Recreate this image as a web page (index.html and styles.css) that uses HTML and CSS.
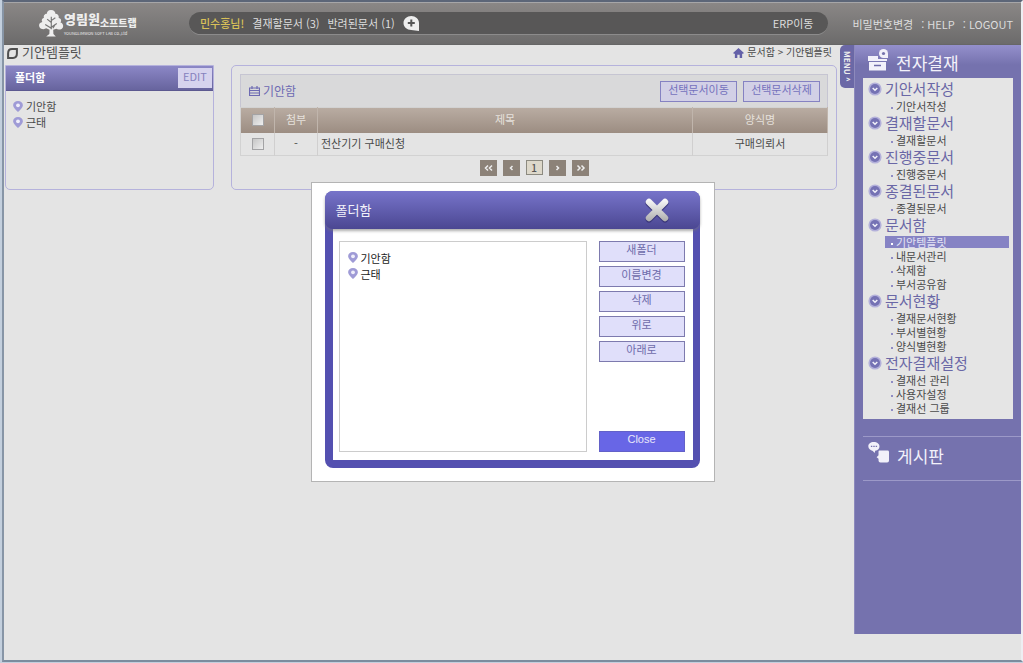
FILE: index.html
```html
<!DOCTYPE html>
<html lang="ko">
<head>
<meta charset="utf-8">
<title>기안템플릿</title>
<link rel="stylesheet" href="styles.css">
</head>
<body>
<svg width="0" height="0" class="defs" aria-hidden="true">
  <symbol id="pin" viewBox="0 0 10 11"><path d="M5 0C2.200 0 .1 1.700.1 4.200.1 6.800 3 8.800 5 11 7 8.800 9.900 6.800 9.900 4.200 9.900 1.700 7.800 0 5 0Z" fill="#9f9bd6"/><circle cx="5" cy="4.300" r="1.900" fill="#efeefa"/></symbol>
  <symbol id="chev" viewBox="0 0 14 14"><circle cx="7" cy="7" r="6.600" fill="#b3b0da"/><circle cx="7" cy="7" r="5" fill="#7572b4"/><path d="M4.700 6 7 8.200 9.300 6" fill="none" stroke="#f2f2fa" stroke-width="1.500"/></symbol>
</svg>
<div class="frame">
  <header class="top">
    <a class="logo" href="#">
      <svg class="tree" viewBox="0 0 26 28"><path d="M13 0C10 0 8.500 2 8.800 4 6.500 4 5 6 5.700 8 3.500 8.500 2.800 11 4 12.500 1 13 0 15.500 1 17.500 2 20 6 20.500 8 19L11.500 20.500 11.300 25 8 27.500H18L15.500 25 15.300 20.500 18.500 19.500C21 21 25 20 25.500 17.500 26 15.500 25 13.500 22.800 13 24.500 11 23 8.500 21 8.300 21.500 6 20 4 17.500 4 17.800 2 16 0 13 0Z" fill="#eee"/><path d="M13.300 20V7M13.300 13 9 9.500M13.300 11 17.500 8M7 15 12.500 18.500 19 14M17 15.500 15 19" fill="none" stroke="#777" stroke-width="1.200"/></svg>
      <span class="logo-text"><span class="logo-name"><b>영림원</b><b class="small">소프트랩</b></span><span class="logo-sub">YOUNGLIMWON SOFT LAB Co.,Ltd</span></span>
    </a>
    <div class="pill">
      <b class="user">민수홍님!</b>
      <a href="#">결재할문서 (3)</a>
      <a href="#">반려된문서 (1)</a>
      <button class="plus" aria-label="추가"><svg viewBox="0 0 17 15"><path d="M8.300 0C4 0 .5 3 .5 7S4 14 8.300 14L16 15V7C16 3 12.500 0 8.300 0Z" fill="#eee"/><path d="M8.300 3.500V10.500M4.800 7H11.800" stroke="#555" stroke-width="2"/></svg></button>
      <a class="erp" href="#">ERP이동</a>
    </div>
    <nav class="util"><a href="#">비밀번호변경</a><a href="#">: HELP</a><a href="#">: LOGOUT</a></nav>
  </header>

  <div class="page">
    <main class="main">
      <div class="heading">
        <h1><svg class="leaf" viewBox="0 0 12 12"><path d="M5.500 1.200H10.800V6C10.800 9 9 10.800 6.500 10.800H1.200V6C1.200 3 3 1.200 5.500 1.200Z" fill="none" stroke="#505050" stroke-width="2.200"/></svg>기안템플릿</h1>
        <div class="crumb"><svg class="home" viewBox="0 0 12 11"><path d="M6 0 12 5.500 11 6.200H10V11H7.300V7.500H4.700V11H2V6.200H1L0 5.500Z" fill="#6360a8"/></svg>문서함 &gt; 기안템플릿</div>
      </div>
      <div class="columns">
        <section class="folders">
          <div class="folders-head"><h2>폴더함</h2><button>EDIT</button></div>
          <ul class="tree-list"><li><svg><use href="#pin"/></svg>기안함</li><li><svg><use href="#pin"/></svg>근태</li></ul>
        </section>
        <section class="docs">
          <div class="docs-bar">
            <h2><svg viewBox="0 0 11 10"><path d="M.5 2H10.500V9.500H.5ZM1 4.500H10M1 7H10M3 0V3M8 0V3" fill="none" stroke="#6d6ab2" stroke-width="1.200"/></svg>기안함</h2>
            <button>선택문서이동</button><button>선택문서삭제</button>
          </div>
          <table>
            <colgroup><col class="c1"><col class="c2"><col><col class="c4"></colgroup>
            <thead><tr><th><input type="checkbox" aria-label="전체 선택"></th><th>첨부</th><th>제목</th><th>양식명</th></tr></thead>
            <tbody><tr><td><input type="checkbox" aria-label="전산기기 구매신청 선택"></td><td>-</td><td class="subject">전산기기 구매신청</td><td>구매의뢰서</td></tr></tbody>
          </table>
          <nav class="pager">
            <button aria-label="처음"><svg viewBox="0 0 17 16"><path d="M8 5.500 5.500 8 8 10.500M12 5.500 9.500 8 12 10.500"/></svg></button>
            <button aria-label="이전"><svg viewBox="0 0 17 16"><path d="M9.500 6 7.500 8 9.500 10"/></svg></button>
            <button class="current">1</button>
            <button aria-label="다음"><svg viewBox="0 0 17 16"><path d="M7.500 6 9.500 8 7.500 10"/></svg></button>
            <button aria-label="마지막"><svg viewBox="0 0 17 16"><path d="M5.500 5.500 8 8 5.500 10.500M9.500 5.500 12 8 9.500 10.500"/></svg></button>
          </nav>
        </section>
      </div>
    </main>

    <button class="menu-tab">MENU ^</button>
    <aside class="side">
      <h2 class="side-title"><svg viewBox="0 0 21 22"><path d="M0 7H10V10H19V12H0ZM1 13H18V21.500H1Z" fill="#f2f1fa"/><path d="M6 16.500H13" stroke="#6d6aa8" stroke-width="1.500"/><path d="M15.500 0A4.500 4.500 0 1 0 15.500 9H20V4.500A4.500 4.500 0 0 0 15.500 0Z" fill="#f2f1fa"/><circle cx="15.500" cy="4.500" r="1.600" fill="#7673ae"/></svg>전자결재</h2>
      <nav class="menu">
        <h3><svg><use href="#chev"/></svg>기안서작성</h3>
        <ul><li><a href="#">기안서작성</a></li></ul>
        <h3><svg><use href="#chev"/></svg>결재할문서</h3>
        <ul><li><a href="#">결재할문서</a></li></ul>
        <h3><svg><use href="#chev"/></svg>진행중문서</h3>
        <ul><li><a href="#">진행중문서</a></li></ul>
        <h3><svg><use href="#chev"/></svg>종결된문서</h3>
        <ul><li><a href="#">종결된문서</a></li></ul>
        <h3><svg><use href="#chev"/></svg>문서함</h3>
        <ul><li class="on"><a href="#">기안템플릿</a></li><li><a href="#">내문서관리</a></li><li><a href="#">삭제함</a></li><li><a href="#">부서공유함</a></li></ul>
        <h3><svg><use href="#chev"/></svg>문서현황</h3>
        <ul><li><a href="#">결재문서현황</a></li><li><a href="#">부서별현황</a></li><li><a href="#">양식별현황</a></li></ul>
        <h3><svg><use href="#chev"/></svg>전자결재설정</h3>
        <ul><li><a href="#">결재선 관리</a></li><li><a href="#">사용자설정</a></li><li><a href="#">결재선 그룹</a></li></ul>
      </nav>
      <h2 class="board"><svg viewBox="0 0 23 22"><path d="M6 0C2.500 0 .3 2 .3 4.500S2.500 9 5 9.300L7 11.500 7.500 9.200C10.500 8.800 12 7 12 4.500S9.500 0 6 0Z" fill="#f2f1fa"/><path d="M3 4.500H9.500" stroke="#7673ae" stroke-width="1.400" stroke-dasharray="1.500 1"/><path d="M12 9H20.500Q22 9 22 10.500V19.500Q22 21.500 20 21.500H13Q11 21.500 11 19.500V17.500L9 16 11 14V10Q11 9 12 9Z" fill="#f2f1fa"/></svg>게시판</h2>
    </aside>
  </div>
</div>

<div class="overlay">
  <div class="popup" role="dialog" aria-labelledby="dlg-title">
    <div class="dialog">
      <div class="dialog-head"><h2 id="dlg-title">폴더함</h2>
        <button class="x" aria-label="닫기"><svg viewBox="0 0 26 26"><defs><linearGradient id="g" gradientUnits="userSpaceOnUse" x1="0" y1="1" x2="0" y2="25"><stop offset="0" stop-color="#fff"/><stop offset="1" stop-color="#aaa"/></linearGradient></defs><path d="M5 6 21 22M21 6 5 22" stroke="#39357a" stroke-width="7" stroke-linecap="round"/><path d="M5 5 21 21M21 5 5 21" stroke="url(#g)" stroke-width="6.500" stroke-linecap="round"/></svg></button>
      </div>
      <div class="dialog-body">
        <ul class="tree-list"><li><svg><use href="#pin"/></svg>기안함</li><li><svg><use href="#pin"/></svg>근태</li></ul>
        <div class="actions">
          <button>새폴더</button><button>이름변경</button><button>삭제</button><button>위로</button><button>아래로</button>
          <button class="close">Close</button>
        </div>
      </div>
    </div>
  </div>
</div>
</body>
</html>
```
FILE: styles.css
```css
* { box-sizing: border-box; }
body, h1, h2, h3, ul { margin: 0; padding: 0; }
ul { list-style: none; }
a { color: inherit; text-decoration: none; }
h1, h2, h3 { font-weight: 400; }
button { font: inherit; margin: 0; padding: 0; border: 0; cursor: pointer; }
svg { display: block; flex: none; }
.defs { position: absolute; }
body {
  padding: 0 0 1px 2px;
  font: 11px/14px "Noto Sans CJK KR", "Liberation Sans", sans-serif;
  color: #4a4a4a;
  background: #c3cfdd;
}

.frame {
  display: flex;
  flex-direction: column;
  min-height: calc(100vh - 1px);
  background: #e4e4e4;
  border: 2px solid;
  border-color: #5c6678 #eeeef2 #7b8c9e #8795a6;
}

/* Top bar */
.top {
  display: flex;
  align-items: center;
  height: 43px;
  padding: 0 8px 0 34px;
  color: #ddd;
  background: linear-gradient(#8a8786, #6c6b6b);
  border-top: 1px solid #a6a6a8;
  border-bottom: 1px solid #666;
}
.logo { display: flex; align-items: center; width: 151px; color: #eee; }
.tree { width: 26px; height: 27px; }
.logo-text { display: flex; flex-direction: column; white-space: nowrap; }
.logo-name { display: flex; align-items: flex-start; height: 18px; font-size: 13px; line-height: 14px; font-weight: 900; }
.logo-name b { font-weight: 900; }
.logo-name .small { padding-top: 5px; font-size: 10px; line-height: 12px; }
.logo-sub { font-size: 4px; line-height: 6px; }
.pill {
  display: flex;
  flex: 1;
  align-items: center;
  gap: 8px;
  height: 23px;
  padding: 0 15px 0 11px;
  background: #585757;
  border-bottom: 1px solid #8c8b8b;
  border-radius: 12px;
}
.user { color: #d9c158; font-weight: 500; }
.plus { background: none; }
.plus svg { width: 17px; height: 15px; }
.erp { margin-left: auto; }
.util { display: flex; gap: 8px; padding-left: 24px; }

/* Page columns */
.page { display: flex; flex: 1; }
.main { flex: 1; min-width: 0; padding: 0 3px 0 1px; }
.heading { display: flex; justify-content: space-between; height: 20px; }
.heading h1 { display: flex; gap: 4px; padding-left: 2px; font-size: 13px; line-height: 13px; color: #505050; }
.leaf { width: 11px; height: 11px; margin-top: 3px; }
.crumb { display: flex; gap: 3px; padding-right: 5px; font-size: 10px; line-height: 14px; }
.home { width: 11px; height: 10px; margin-top: 3px; }
.columns { display: flex; gap: 17px; align-items: stretch; }

.folders { width: 209px; border: 1px solid #b5b2dc; border-radius: 0 0 5px 5px; }
.folders-head {
  display: flex;
  justify-content: space-between;
  height: 25px;
  padding: 2px 1px 2px 9px;
  color: #fff;
  background: linear-gradient(#8b87c6, #67649e);
  border-bottom: 1px solid #5c5990;
}
.folders-head h2 { font-size: 11px; line-height: 18px; font-weight: 700; }
.folders-head button { width: 34px; line-height: 14px; padding-bottom: 5px; color: #8582be; background: #d6d3ee; }
.tree-list li { display: flex; align-items: center; gap: 3px; line-height: 16px; }
.tree-list svg { width: 10px; height: 11px; }
.folders .tree-list { padding: 7px; }

.docs { flex: 1; min-width: 0; height: 125px; padding: 8px; border: 1px solid #b5b2dc; border-radius: 5px; }
.docs-bar {
  display: flex;
  align-items: center;
  gap: 6px;
  height: 33px;
  padding: 0 7px 0 8px;
  background: #d9d9da;
  border: 1px solid #c6c5d2;
  border-bottom: 0;
}
.docs-bar h2 { display: flex; flex: 1; align-items: center; gap: 3px; font-size: 12px; color: #6d6ab2; }
.docs-bar h2 svg { width: 11px; height: 10px; }
.docs-bar button { width: 77px; height: 21px; padding-bottom: 5px; line-height: 14px; color: #7572bd; background: #d2d0e6; border: 1px solid #8582c2; }
table { width: 100%; table-layout: fixed; border-collapse: collapse; border: 1px solid #d2d2d2; }
.c1 { width: 34px; } .c2 { width: 43px; } .c4 { width: 135px; }
th, td { padding: 0 0 2px; text-align: center; font-weight: 400; line-height: 14px; border-right: 1px solid #d0cfcf; }
th { height: 25px; color: #e6e1dc; border-right-color: #c0b5ac; }
thead tr { background: linear-gradient(#b9aca2, #9c8d82); }
td { height: 23px; }
th:first-child, td:first-child { padding: 0; }
.subject { padding-left: 3px; text-align: left; }
input[type="checkbox"] { display: block; width: 12px; height: 12px; margin: 0 auto; appearance: none; background: linear-gradient(135deg, #c6c6c6, #eee); border: 1px solid #a3a3a5; }
.pager { display: flex; justify-content: center; gap: 6px; padding-top: 4px; }
.pager button { width: 17px; height: 16px; background: #8c8278; }
.pager path { fill: none; stroke: #eee; stroke-width: 1.500; }
.pager .current { height: 15px; line-height: 13px; font-size: 10px; font-weight: 500; color: #555; background: #ddd8ca; border: 1px solid #8c8a80; }

/* Side menu */
.menu-tab {
  align-self: flex-start;
  width: 14px;
  height: 43px;
  writing-mode: vertical-rl;
  font-size: 8px;
  line-height: 14px;
  font-weight: 700;
  color: #eee;
  background: #6b68a6;
  border-radius: 5px 0 0 5px;
}
.side {
  width: 167px;
  margin-bottom: 26px;
  padding-left: 8px;
  background: linear-gradient(#9490cc, #7572ae 20px);
  border-left: 1px solid #8d8abc;
}
.side-title, .board { display: flex; gap: 7px; font-size: 17px; color: #f2f1fa; }
.side-title { height: 33px; padding: 4px 0 0 5px; line-height: 28px; }
.side-title svg { width: 21px; height: 22px; }
.menu { margin-right: 8px; padding: 1px 4px 4px 5px; background: #e5e5e5; }
.menu h3 { display: flex; align-items: center; gap: 3px; font-size: 15px; line-height: 20px; color: #6a67a6; }
.menu h3 svg { width: 14px; height: 14px; }
.menu ul { padding-left: 17px; }
.menu li { display: flex; align-items: center; gap: 3px; height: 14px; padding-left: 6px; line-height: 12px; }
.menu li::before { content: ""; width: 2px; height: 2px; margin-top: 4px; background: #8f8cc4; }
.menu .on { height: 12px; margin: 1px 0; color: #e4e3f4; background: #8683c4; }
.menu .on::before { background: #fff; }
.board {
  height: 45px;
  margin-top: 17px;
  padding: 5px 0 0 5px;
  line-height: 28px;
  border: solid #9c99c8;
  border-width: 1px 0;
}
.board svg { width: 22px; height: 21px; }

/* Folder dialog */
.overlay { position: fixed; inset: 0; display: flex; align-items: center; justify-content: center; padding-left: 2px; }
.popup { width: 404px; padding: 8px 14px 13px 13px; background: #fff; border: 1px solid #b4b4b4; }
.dialog { background: #5450b0; border-radius: 8px; padding-bottom: 8px; }
.dialog-head {
  position: relative;
  display: flex;
  align-items: center;
  justify-content: space-between;
  height: 38px;
  padding: 0 30px 0 11px;
  color: #f2f2fa;
  background: linear-gradient(#7774ca, #4b4792);
  border-radius: 8px;
  box-shadow: 0 2px 3px #77777799;
}
.dialog-head h2 { font-size: 13px; }
.x { background: none; }
.x svg { width: 26px; height: 26px; }
.dialog-body { display: flex; gap: 12px; margin: 0 7px 0 8px; padding: 12px 8px 8px 6px; background: #fff; }
.dialog .tree-list { flex: 1; height: 211px; padding: 8px; color: #222; border: 1px solid #ccc; }
.actions { display: flex; flex-direction: column; gap: 4px; width: 86px; }
.actions button { height: 21px; padding-bottom: 5px; line-height: 14px; color: #6e6baa; background: #e0dffa; border: 1px solid #7d7aae; }
.actions .close { margin-top: auto; font-family: "Liberation Sans", sans-serif; color: #e8e8fa; background: #6866e6; border-color: #6361c8; }
```
